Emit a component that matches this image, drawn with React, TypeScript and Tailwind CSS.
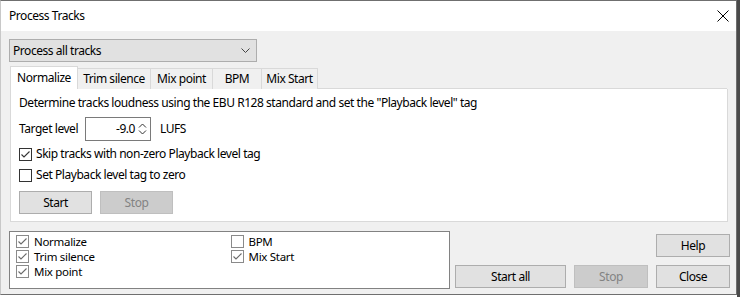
import React from "react";

function Check({ checked, light }: { checked: boolean; light?: boolean }) {
  const border = light ? "#8a8a8a" : "#333333";
  const mark = light ? "#6a6a6a" : "#333333";
  return (
    <svg width="13" height="13" viewBox="0 0 13 13" className="shrink-0">
      <rect x="0.5" y="0.5" width="12" height="12" fill="#ffffff" stroke={border} />
      {checked && (
        <path d="M2.5 6.5 L5 9 L10.5 3.5" fill="none" stroke={mark} strokeWidth="1.1" />
      )}
    </svg>
  );
}

function Btn({ label, disabled, w }: { label: string; disabled?: boolean; w: string }) {
  return (
    <div
      className={
        "h-[23px] flex items-center justify-center border " +
        w +
        " " +
        (disabled
          ? "bg-[#cccccc] border-[#bfbfbf] text-[#838383]"
          : "bg-[#e1e1e1] border-[#adadad] text-black")
      }
    >
      {label}
    </div>
  );
}

function ListRow({ label, checked }: { label: string; checked: boolean }) {
  return (
    <div className="flex items-center h-[15px] gap-[5px]">
      <Check checked={checked} light />
      <span className="block h-[15px] leading-[15px] text-[11.5px] tracking-[-0.3px]">{label}</span>
    </div>
  );
}

export default function App() {
  const tabs = ["Trim silence", "Mix point", "BPM", "Mix Start"];
  const tabW = ["w-[73px]", "w-[62px]", "w-[49px]", "w-[56px]"];
  return (
    <div className="w-[740px] h-[297px] bg-[#f4f4f4] flex font-['Noto_Sans',sans-serif] text-[12px] leading-[16px] text-black tracking-[-0.45px]">
      <div className="flex flex-col">
        <div className="w-[737px] h-[295px] border border-[#6f6f6f] border-l-[#c8c8c8] flex flex-col bg-[#f0f0f0]">
          {/* title bar */}
          <div className="h-[30px] bg-white flex items-center justify-between pl-[8px] pr-[6px] shrink-0">
            <span className="text-[12px]">Process Tracks</span>
            <svg width="12" height="12" viewBox="0 0 12 12" className="mr-[1px]">
              <path d="M0.5 0.5 L11.5 11.5 M11.5 0.5 L0.5 11.5" stroke="#000" strokeWidth="1" />
            </svg>
          </div>
          {/* body */}
          <div className="flex flex-col px-[8px] pt-[8px]">
            <div className="w-[248px] h-[23px] bg-[#e1e1e1] border border-[#adadad] flex items-center justify-between pl-[3px] pr-[6px]">
              <span>Process all tracks</span>
              <svg width="9" height="6" viewBox="0 0 9 6">
                <path d="M0.5 0.5 L4.5 4.5 L8.5 0.5" fill="none" stroke="#444" strokeWidth="1" />
              </svg>
            </div>
            {/* tabs */}
            <div className="flex items-end ml-[1px] mt-[4px] h-[23px] relative z-10">
              <div className="w-[68px] h-[23px] bg-white border border-[#d9d9d9] border-b-0 flex items-center justify-center pb-[1px]">
                Normalize
              </div>
              {tabs.map((t, i) => (
                <div
                  key={t}
                  className={
                    "h-[21px] bg-[#f0f0f0] border border-[#d9d9d9] border-l-0 border-b-0 flex items-center justify-center " +
                    tabW[i]
                  }
                >
                  {t}
                </div>
              ))}
            </div>
            <div className="ml-[1px] w-[718px] h-[133px] bg-white border border-[#d9d9d9] border-t-0 flex flex-col pl-[8px] pt-[6px] relative">
              <div className="absolute left-[67px] right-0 top-[-1px] h-px bg-[#d9d9d9]" />
              <div>Determine tracks loudness using the EBU R128 standard and set the "Playback level" tag</div>
              <div className="flex items-center mt-[6px] h-[24px]">
                <span className="w-[66px]">Target level</span>
                <div className="w-[66px] h-[24px] border border-[#7a7a7a] flex items-center justify-end pr-[3px] gap-[3px]">
                  <span>-9.0</span>
                  <svg width="9" height="12" viewBox="0 0 9 12">
                    <path d="M1 4.5 L4.5 1 L8 4.5 M1 7.5 L4.5 11 L8 7.5" fill="none" stroke="#333" strokeWidth="1" />
                  </svg>
                </div>
                <span className="ml-[9px]">LUFS</span>
              </div>
              <div className="flex items-center gap-[4px] mt-[6px] h-[14px]">
                <Check checked />
                <span>Skip tracks with non-zero Playback level tag</span>
              </div>
              <div className="flex items-center gap-[4px] mt-[7px] h-[14px]">
                <Check checked={false} />
                <span>Set Playback level tag to zero</span>
              </div>
              <div className="flex gap-[8px] mt-[9px]">
                <Btn label="Start" w="w-[73px]" />
                <Btn label="Stop" w="w-[73px]" disabled />
              </div>
            </div>
            {/* bottom */}
            <div className="flex mt-[9px] justify-between">
              <div className="w-[441px] h-[58px] bg-white border border-[#828282] grid grid-cols-2 content-start pt-[2px] pl-[6px]">
                <div className="flex flex-col">
                  <ListRow label="Normalize" checked />
                  <ListRow label="Trim silence" checked />
                  <ListRow label="Mix point" checked />
                </div>
                <div className="flex flex-col -ml-[2px]">
                  <ListRow label="BPM" checked={false} />
                  <ListRow label="Mix Start" checked />
                </div>
              </div>
              <div className="flex flex-col items-end gap-[8px] pt-[3px] mr-[-2px]">
                <Btn label="Help" w="w-[74px]" />
                <div className="flex gap-[8px]">
                  <Btn label="Start all" w="w-[111px]" />
                  <Btn label="Stop" w="w-[74px]" disabled />
                  <Btn label="Close" w="w-[74px]" />
                </div>
              </div>
            </div>
          </div>
        </div>
        <div className="h-[2px] bg-[#ffffff]" />
      </div>
      <div className="w-[3px] h-[297px] bg-[#4a4a4a]" />
    </div>
  );
}
